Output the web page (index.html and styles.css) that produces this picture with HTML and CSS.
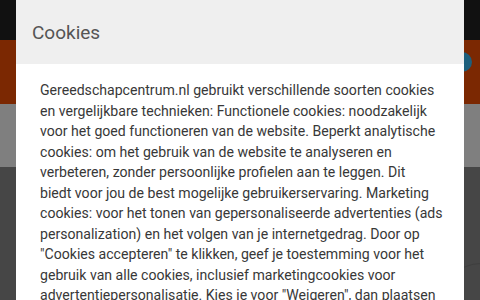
FILE: index.html
```html
<!DOCTYPE html>
<html lang="nl">
<head>
<meta charset="utf-8">
<title>Cookies</title>
<link rel="stylesheet" href="styles.css">
</head>
<body>
<div class="page">
  <div class="topbar"></div>
  <div class="navbar"><span class="badge"></span></div>
  <div class="band"></div>
  <div class="content"><span class="ring"></span></div>
</div>
<div class="modal">
  <div class="modal-header"><h2 class="modal-title">Cookies</h2></div>
  <div class="modal-body">
    <p>Gereedschapcentrum.nl gebruikt verschillende soorten cookies<br>
en vergelijkbare technieken: Functionele cookies: noodzakelijk<br>
voor het goed functioneren van de website. Beperkt analytische<br>
cookies: om het gebruik van de website te analyseren en<br>
verbeteren, zonder persoonlijke profielen aan te leggen. Dit<br>
biedt voor jou de best mogelijke gebruikerservaring. Marketing<br>
cookies: voor het tonen van gepersonaliseerde advertenties (ads<br>
personalization) en het volgen van je internetgedrag. Door op<br>
"Cookies accepteren" te klikken, geef je toestemming voor het<br>
gebruik van alle cookies, inclusief marketingcookies voor<br>
advertentiepersonalisatie. Kies je voor "Weigeren", dan plaatsen<br>
we alleen functionele en beperkt analytische cookies.</p>
  </div>
</div>
</body>
</html>
```
FILE: styles.css
```css
html, body {
  margin: 0;
  padding: 0;
  height: 100%;
  overflow: hidden;
}
body {
  font-family: Roboto, "Liberation Sans", sans-serif;
  background: #464646;
}
.page {
  display: flex;
  flex-direction: column;
  height: 100%;
}
.topbar {
  height: 40px;
  background: #111111;
}
.navbar {
  height: 64px;
  background: #7b2802;
  position: relative;
}
.badge {
  position: absolute;
  left: 452px;
  top: 12px;
  width: 20px;
  height: 20px;
  border-radius: 50%;
  background: #1d5f7c;
}
.band {
  height: 63px;
  background: #7f7f7f;
}
.content {
  flex: 1;
  background: #464646;
  position: relative;
}
.ring {
  position: absolute;
  left: 440px;
  top: 96px;
  width: 80px;
  height: 80px;
  border-radius: 50%;
  border: 1px solid #3e3e3e;
}
.modal {
  position: absolute;
  left: 16px;
  top: 0;
  width: 448px;
  background: #ffffff;
}
.modal-header {
  height: 64px;
  background: #efefef;
  display: flex;
  align-items: center;
  padding: 0 16px;
}
.modal-title {
  margin: 0;
  font-size: 19px;
  font-weight: 400;
  color: #555555;
}
.modal-body {
  padding: 16px 24px;
}
.modal-body p {
  margin: 0;
  font-size: 14.1px;
  line-height: 20.5px;
  white-space: nowrap;
  color: #383838;
}
```
